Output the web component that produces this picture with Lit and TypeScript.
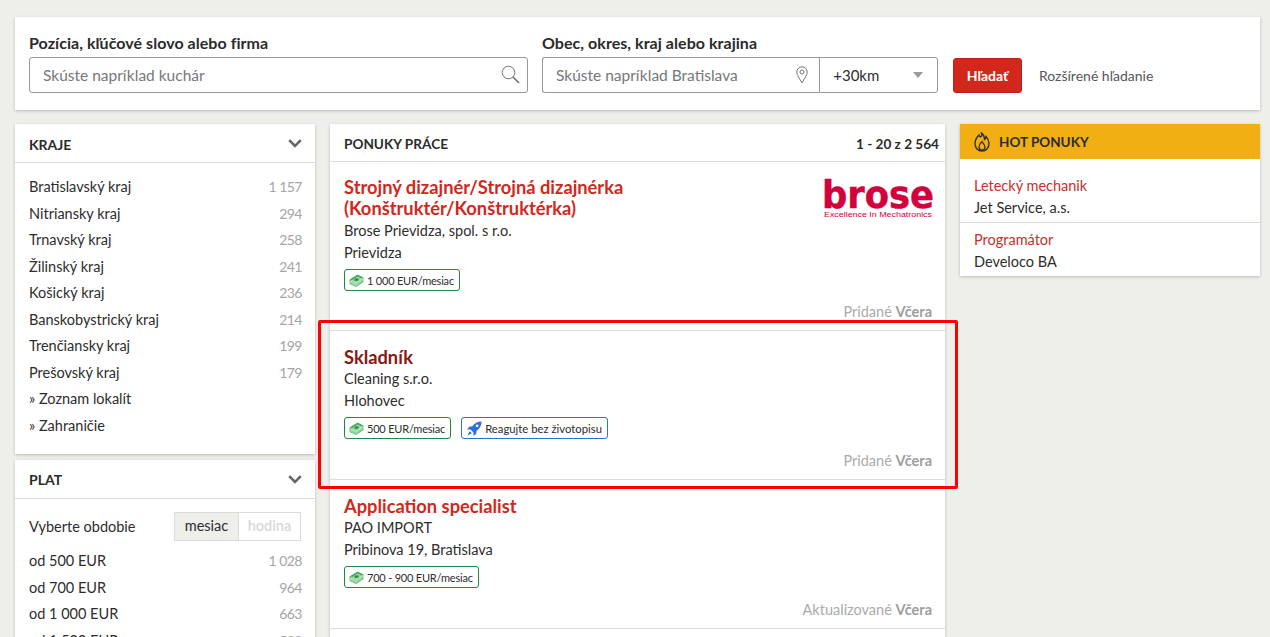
import { LitElement, html, css, unsafeCSS } from "lit";
import { customElement } from "lit/decorators.js";

const FONT = unsafeCSS(`Lato, "Noto Sans", sans-serif`);

const money = html`<svg class="bi" width="15" height="13" viewBox="0 0 15 13"><path d="M.5 8 8.500 2.500l6 3-7.500 5.500z" fill="#8fd09b"/><path d="M.5 5.500 8.500.5l6 3v2l-6-3L.5 8z" fill="#46a85a"/><path d="M.5 8l6.500 3 7.500-5.500v2.500L7 13 .5 10z" fill="#5bb56d"/><path d="M.5 5.500 7 8.500l7.500-5M.5 7 7 10l7.500-5.500M.5 8.800 7 11.800l7.500-5.500" fill="none" stroke="#cfeed4" stroke-width=".6"/><ellipse cx="7.500" cy="5.700" rx="2.200" ry="1.400" fill="#2f9346"/></svg>`;
const rocket = html`<svg class="bi" width="15" height="15" viewBox="0 0 17 17"><path d="M16.500.5c-4.500 0-8 2-10.500 5.500L2.500 6.500 0 9.500l4 .2 3.300 3.300.2 4 3-2.500.5-3.500c3.500-2.500 5.500-6 5.500-10.500z" fill="#2f6fdc"/><path d="M3 11.500.5 16.500l5-2.500z" fill="#2f6fdc"/><circle cx="11.500" cy="5.500" r="1.500" fill="#fff"/></svg>`;
const chevron = html`<svg class="chev" width="14" height="9" viewBox="0 0 14 9"><path d="M1.200 1.200 7 7l5.800-5.800" fill="none" stroke="#666" stroke-width="2.600"/></svg>`;

const regions: [string, string][] = [
  ["Bratislavský kraj", "1 157"], ["Nitriansky kraj", "294"], ["Trnavský kraj", "258"],
  ["Žilinský kraj", "241"], ["Košický kraj", "236"], ["Banskobystrický kraj", "214"],
  ["Trenčiansky kraj", "199"], ["Prešovský kraj", "179"], ["» Zoznam lokalít", ""], ["» Zahraničie", ""],
];
const pay: [string, string][] = [
  ["od 500 EUR", "1 028"], ["od 700 EUR", "964"], ["od 1 000 EUR", "663"], ["od 1 500 EUR", "520"],
];
interface Job { t: string[]; c: string; l: string; b: string; rocket?: boolean; d: string; logo?: boolean; hover?: boolean }
const jobs: Job[] = [
  { t: ["Strojný dizajnér/Strojná dizajnérka", "(Konštruktér/Konštruktérka)"], c: "Brose Prievidza, spol. s r.o.", l: "Prievidza", b: "1 000 EUR/mesiac", d: "Pridané", logo: true },
  { t: ["Skladník"], c: "Cleaning s.r.o.", l: "Hlohovec", b: "500 EUR/mesiac", rocket: true, d: "Pridané", hover: true },
  { t: ["Application specialist"], c: "PAO IMPORT", l: "Pribinova 19, Bratislava", b: "700 - 900 EUR/mesiac", d: "Aktualizované" },
];

@customElement("app-root")
export class AppRoot extends LitElement {
  static styles = css`
    :host { display: block; height: 637px; overflow: hidden; background: #eeeeea; color: #2d2d2d; font-family: ${FONT}; font-size: 14.500px; position: relative; }
    .page { padding: 17px 10px 0 15px; display: flex; flex-direction: column; gap: 14px; }
    .panel { background: #fff; box-shadow: 0 1px 3px rgba(0,0,0,.22); }
    .search { height: 93px; box-sizing: border-box; padding: 15px 14px 0; display: flex; align-items: flex-start; }
    .field { display: flex; flex-direction: column; }
    .label { font-weight: 700; font-size: 16px; line-height: 21px; height: 25px; color: #2b2b2b; letter-spacing: .05px; }
    .box { height: 36px; box-sizing: border-box; border: 1px solid #979797; border-radius: 3px; display: flex; align-items: center; font-size: 15.500px; color: #77777a; padding: 0 7px 1px 13px; justify-content: space-between; }
    .f1 { width: 499px; margin-right: 14px; }
    .f2 { width: 396px; margin-right: 15px; }
    .pair { display: flex; height: 36px; }
    .pair .box.loc { width: 278px; border-right: none; border-radius: 3px 0 0 3px; padding-right: 11px; }
    .pair .box.km { width: 119px; border-radius: 0 3px 3px 0; color: #2d2d2d; padding-right: 14px; font-size: 15px; }
    .caret { width: 0; height: 0; border: 5px solid transparent; border-top: 6px solid #9a9a9a; border-bottom: none; }
    .btn { margin-top: 26px; width: 69px; height: 35px; box-sizing: border-box; background: #d2281c; border: 1px solid #b7211a; border-radius: 3px; color: #fff; font-weight: 700; font-size: 14px; display: flex; align-items: center; justify-content: center; }
    .adv { margin-top: 26px; margin-left: 17px; font-size: 14px; line-height: 36px; color: #55575b; }
    .cols { display: flex; gap: 15px; align-items: flex-start; }
    .left { width: 300px; display: flex; flex-direction: column; gap: 6px; }
    .mid { width: 615px; }
    .right { width: 300px; }
    .fhead { border-bottom: 1px solid #dcdcd8; display: flex; align-items: center; justify-content: space-between; padding: 1px 13px 0 14px; height: 37px; font-weight: 700; font-size: 14px; color: #2b2b2b; }
    .r1 .fhead span { padding-top: 2px; }
    .f-body { padding: 11px 13px 16px 14px; }
    .row { display: flex; justify-content: space-between; height: 26.500px; line-height: 26.500px; }
    .row .n { color: #a5a5a5; font-size: 14px; letter-spacing: -.5px; }
    .r1 { height: 330px; }
    .f-body.pay { padding-top: 13px; }
    .period { display: flex; justify-content: space-between; align-items: center; height: 29px; margin-bottom: 7px; }
    .toggle { display: flex; height: 29px; width: 127px; box-sizing: border-box; border: 1px solid #dcdcd8; line-height: 26px; text-align: center; margin-right: 1px; }
    .toggle .on { width: 63px; background: #eeeeea; border-right: 1px solid #dcdcd8; }
    .toggle .off { flex: 1; color: #d8d8d8; font-weight: 600; }
    .mhead { height: 38px; box-sizing: border-box; border-bottom: 1px solid #dcdcd8; display: flex; align-items: center; justify-content: space-between; padding: 2px 6px 0 14px; font-weight: 700; font-size: 13.600px; color: #2b2b2b; }
    .job { position: relative; padding: 16px 14px 8px; border-bottom: 1px solid #dcdcd8; height: 149px; box-sizing: border-box; }
    .job.first { height: 169px; padding-top: 15px; }
    .job h3 { margin: 0 0 1px; font-size: 18.300px; line-height: 20px; font-weight: 700; color: #d2281c; }
    .job.first h3 { line-height: 21px; }
    .job.hover h3 { color: #8a1710; }
    .job .t { line-height: 22px; }
    .badges { display: flex; gap: 10px; margin-top: 5px; height: 22px; }
    .badge { display: flex; align-items: center; gap: 3px; box-sizing: border-box; height: 22px; border-radius: 3px; border: 1px solid #1f8a3c; padding: 0 5px 0 4px; font-size: 11px; letter-spacing: -.2px; color: #2d2d2d; }
    .badge.blue { border-color: #2f6fdc; padding-left: 5px; gap: 3px; font-size: 11.300px; letter-spacing: 0; }
    .bi { display: block; flex: none; }
    .date { position: absolute; right: 13px; bottom: 8px; line-height: 20px; color: #aaa; }
    .date b { color: #9d9d9d; }
    .logo { position: absolute; left: 494px; top: 15px; display: block; overflow: visible; }
    .hot { height: 35px; background: #f2af13; display: flex; align-items: center; gap: 9px; padding: 0 14px; font-weight: 700; font-size: 13.500px; color: #2b2b2b; }
    .hitem { padding: 16px 14px 3px; height: 63px; box-sizing: border-box; }
    .hitem + .hitem { border-top: 1px solid #dcdcd8; padding-top: 6px; height: 54px; }
    .hitem .a { color: #c9302c; line-height: 22px; }
    .hitem .b { line-height: 22px; }
    .mark { position: absolute; left: 318px; top: 320px; width: 640px; height: 169px; box-sizing: border-box; border: 3px solid #f00; border-radius: 2px; pointer-events: none; }
  `;

  private job(j: Job, first: boolean) {
    return html`<div class="job ${first ? "first" : ""} ${j.hover ? "hover" : ""}">
      <h3>${j.t.map((x) => html`<div>${x}</div>`)}</h3>
      <div class="t">${j.c}</div>
      <div class="t">${j.l}</div>
      <div class="badges">
        <div class="badge">${money}<span>${j.b}</span></div>
        ${j.rocket ? html`<div class="badge blue">${rocket}<span>Reagujte bez životopisu</span></div>` : ""}
      </div>
      ${j.logo ? html`<svg class="logo" width="110" height="42" viewBox="0 0 110 42">
        <text x="-2" y="31" font-family="DejaVu Sans, sans-serif" font-size="37" font-weight="700" fill="#d2003c" stroke="#d2003c" stroke-width=".5" textLength="112" lengthAdjust="spacingAndGlyphs">brose</text>
        <text x="0" y="40" font-family="Liberation Sans, sans-serif" font-size="8" fill="#d2003c" textLength="108" lengthAdjust="spacingAndGlyphs">Excellence In Mechatronics</text>
      </svg>` : ""}
      <div class="date">${j.d} <b>Včera</b></div>
    </div>`;
  }

  render() {
    return html`<div class="page">
      <section class="panel search">
        <div class="field f1">
          <div class="label">Pozícia, kľúčové slovo alebo firma</div>
          <div class="box"><span>Skúste napríklad kuchár</span>
            <svg width="19" height="19" viewBox="0 0 19 19"><circle cx="7.500" cy="7.500" r="6.300" fill="none" stroke="#777" stroke-width="1"/><path d="M12 12l6 6" stroke="#777" stroke-width="1.700"/></svg>
          </div>
        </div>
        <div class="field f2">
          <div class="label">Obec, okres, kraj alebo krajina</div>
          <div class="pair">
            <div class="box loc"><span>Skúste napríklad Bratislava</span>
              <svg width="12" height="18" viewBox="0 0 12 18"><path d="M6 17C3.500 12 .8 9.500.8 6a5.200 5.200 0 0 1 10.400 0C11.200 9.500 8.500 12 6 17z" fill="none" stroke="#777"/><circle cx="6" cy="6" r="2" fill="none" stroke="#777"/></svg>
            </div>
            <div class="box km"><span>+30km</span><i class="caret"></i></div>
          </div>
        </div>
        <div class="btn">Hľadať</div>
        <div class="adv">Rozšírené hľadanie</div>
      </section>
      <div class="cols">
        <div class="left">
          <section class="panel r1">
            <div class="fhead"><span>KRAJE</span>${chevron}</div>
            <div class="f-body">${regions.map(([a, b]) => html`<div class="row"><span>${a}</span><span class="n">${b}</span></div>`)}</div>
          </section>
          <section class="panel">
            <div class="fhead"><span>PLAT</span>${chevron}</div>
            <div class="f-body pay">
              <div class="period"><span>Vyberte obdobie</span><div class="toggle"><div class="on">mesiac</div><div class="off">hodina</div></div></div>
              ${pay.map(([a, b]) => html`<div class="row"><span>${a}</span><span class="n">${b}</span></div>`)}
            </div>
          </section>
        </div>
        <section class="panel mid">
          <div class="mhead"><span>PONUKY PRÁCE</span><span>1 - 20 z 2 564</span></div>
          ${jobs.map((j, i) => this.job(j, i === 0))}
          <div class="job"></div>
        </section>
        <section class="panel right">
          <div class="hot">
            <svg width="16" height="20" viewBox="0 0 16 20"><path d="M7.500 1c1 3-1 4-1 4C5.500 4.500 5 3.500 5 3 2.500 5.500 1 8 1 11.500 1 16 4 19 8 19s7-3 7-7.500c0-3-1.500-5.500-3-7-.2 1.500-.8 2.500-1.500 3C10.500 5 9.500 2.500 7.500 1z" fill="none" stroke="#2b2b2b" stroke-width="1.300"/><path d="M8 9.500c-2 2-3 3.500-3 5.500 0 2 1.300 3 3 3s3-1 3-3c0-2-1.500-3-3-5.500z" fill="none" stroke="#2b2b2b" stroke-width="1.200"/></svg>
            <span>HOT PONUKY</span>
          </div>
          <div class="hitem"><div class="a">Letecký mechanik</div><div class="b">Jet Service, a.s.</div></div>
          <div class="hitem"><div class="a">Programátor</div><div class="b">Develoco BA</div></div>
        </section>
      </div>
    </div>
    <div class="mark"></div>`;
  }
}
